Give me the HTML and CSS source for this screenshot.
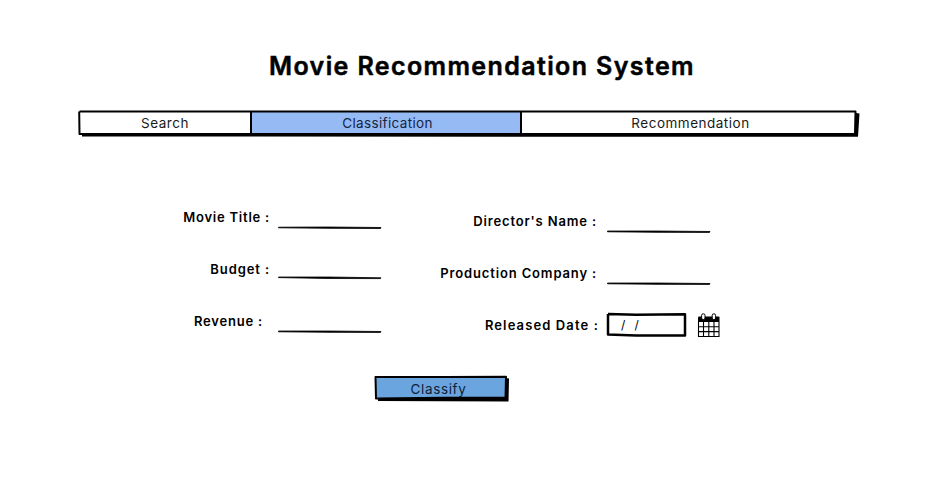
FILE: index.html
```html
<!DOCTYPE html>
<html lang="en">
<head>
<meta charset="utf-8">
<title>Movie Recommendation System</title>
<link rel="stylesheet" href="styles.css">
</head>
<body>
<main class="page">
  <h1 class="title">Movie Recommendation System</h1>
  <nav class="tabs">
    <svg class="frame" width="784" height="28" viewBox="0 0 784 28">
      <path class="ink" d="M778 3L781.500 3.500L780 26.800L4 26.500V23H777Z"/>
      <path class="paper" d="M1 1.500L173 1.500V24H1Z M443 1.500H777L777 24H443Z"/>
      <path class="selected" d="M173 1.500H443V24H173Z"/>
      <path class="outline" d="M1.500 1.500L400 1.400L777.500 1.600L777 24L1.500 24L1.200 1.500M173 1.500V24M443 1.500V24"/>
    </svg>
    <a class="tab tab-search"><span>Search</span></a>
    <a class="tab tab-class"><span>Classification</span></a>
    <a class="tab tab-rec"><span>Recommendation</span></a>
  </nav>
  <form class="form">
    <div class="column left">
      <div class="row"><label class="l-title">Movie Title :</label><svg class="rule" width="104" height="4" viewBox="0 0 104 4"><path d="M.500 1.200L50 1L103 1.500L102.500 2.500L50 2.300L.500 1.800Z"/></svg></div>
      <div class="row budget"><label class="l-budget">Budget :</label><svg class="rule" width="104" height="4" viewBox="0 0 104 4"><path d="M.500 1L50 1L103 1.800L102.500 2.600L50 2.500L.500 1.600Z"/></svg></div>
      <div class="row revenue"><label class="l-revenue">Revenue :</label><svg class="rule" width="104" height="4" viewBox="0 0 104 4"><path d="M.500 1L50 1L103 1.500L102.500 2.400L50 2.300L.500 1.800Z"/></svg></div>
    </div>
    <div class="column right">
      <div class="row"><label class="l-director">Director's Name :</label><svg class="rule" width="104" height="4" viewBox="0 0 104 4"><path d="M.500 1L50 1L103 1.500L102.500 2.400L50 2.300L.500 1.800Z"/></svg></div>
      <div class="row"><label class="l-company">Production Company :</label><svg class="rule" width="104" height="4" viewBox="0 0 104 4"><path d="M.500 1L50 1L103 1.500L102.500 2.400L50 2.300L.500 1.800Z"/></svg></div>
      <div class="row date-row"><label class="l-date">Released Date :</label>
        <div class="date">
          <svg class="frame" width="82" height="26" viewBox="0 0 82 26"><path class="datebox" d="M2 2L30 2.800L79 2.300L79 23.500L30 23.500L2 22.500L2 2"/></svg>
          <span>/&nbsp; /</span>
        </div>
        <svg class="calendar" width="24" height="26" viewBox="0 0 24 26">
          <path class="paper" d="M2 5H22V24H2Z"/>
          <path class="ink" d="M1 4.500Q1 3.500 2 3.500H21.500Q22.500 3.500 22.500 4.500V9H1Z"/>
          <path class="gridline" d="M1.500 9V23.500H22V9M6.500 9V23.500M11.800 9V23.500M17 9V23.500M1.500 13.800H22M1.500 18.600H22"/>
          <rect class="ring" x="4.600" y=".800" width="3.400" height="5.800" rx="1.600"/>
          <rect class="ring" x="15.200" y=".800" width="3.400" height="5.800" rx="1.600"/>
        </svg>
      </div>
    </div>
  </form>
  <button class="classify" type="button">
    <svg class="frame" width="136" height="28" viewBox="0 0 136 28">
      <path class="ink" d="M132 3L135 3.500L134.500 26.500L4 26L4 22H130Z"/>
      <path class="button-face" d="M1.500 2L70 2L132 1.800L131.500 22.500L70 22.700L2 23.500Z"/>
    </svg>
    <span>Classify</span>
  </button>
</main>
</body>
</html>
```
FILE: styles.css
```css
* { box-sizing: border-box; }
body {
  margin: 0;
  background: #fff;
  color: #000;
  font-family: Inter, "Liberation Sans", sans-serif;
}
.page { width: 941px; height: 492px; overflow: hidden; }
.title {
  margin: 48px 0 0 269px;
  font-size: 25px;
  line-height: 36px;
  font-weight: 600;
  letter-spacing: 1.39px;
  white-space: nowrap;
  -webkit-text-stroke: .5px #000;
  stroke-linejoin: round;
}
.frame { position: absolute; left: 0; top: 0; }
.ink { fill: #000; }
.paper { fill: #fff; }
.selected { fill: #96baf3; }
.outline { fill: none; stroke: #000; stroke-width: 2; stroke-linejoin: round; }
.tabs {
  position: relative;
  display: flex;
  width: 784px;
  height: 28px;
  margin: 26px 0 0 78px;
}
.tab {
  position: relative;
  display: flex;
  justify-content: center;
  line-height: 27px;
  font-size: 13.5px;
  letter-spacing: .55px;
  color: #1a1a1a;
}
.tab-search { width: 174px; }
.tab-class { width: 271px; color: #142544; letter-spacing: .35px; }
.tab-rec { width: 335px; letter-spacing: .5px; }
.form { display: flex; margin-top: 53px; height: 184px; }
.column { display: flex; flex-direction: column; }
.left { width: 382px; }
.right { padding-top: 4px; }
.row { display: flex; height: 52px; justify-content: flex-end; }
label {
  line-height: 52px;
  font-size: 13px;
  font-weight: 600;
  letter-spacing: .85px;
  white-space: nowrap;
}
.l-title { letter-spacing: .77px; }
.l-budget { letter-spacing: .9px; }
.l-revenue { letter-spacing: .8px; }
.l-date { letter-spacing: 1.12px; }
.rule { flex: none; margin: 35px 0 0 8px; }
.rule path { stroke: #000; stroke-width: .8; stroke-linejoin: round; }
.budget .rule { margin-top: 33px; }
.revenue .rule { margin-top: 35px; margin-left: 15px; }
.right .row { width: 329px; }
.right .rule { margin-left: 10px; }
.right .date-row { width: 339px; }
.date { position: relative; flex: none; width: 82px; height: 26px; margin: 13px 0 0 7px; }
.date span { position: relative; display: block; padding-left: 15px; line-height: 26px; font-size: 12px; letter-spacing: .8px; }
.datebox { fill: #fff; stroke: #000; stroke-width: 2.5; stroke-linejoin: round; }
.calendar { flex: none; margin: 14px 0 0 9px; }
.gridline { fill: none; stroke: #000; stroke-width: 1.1; }
.ring { fill: #fff; stroke: #000; stroke-width: 1; }
.classify {
  position: relative;
  display: block;
  width: 136px;
  height: 28px;
  margin: 0 0 0 375px;
  padding: 0 9px 0 0;
  border: 0;
  background: none;
  font: 13.5px/24px Inter, "Liberation Sans", sans-serif;
  letter-spacing: .65px;
  color: #0d2137;
}
.classify .frame { left: -1px; }
.classify span { position: relative; }
.button-face { fill: #6ba5df; stroke: #000; stroke-width: 2; stroke-linejoin: round; }
```
